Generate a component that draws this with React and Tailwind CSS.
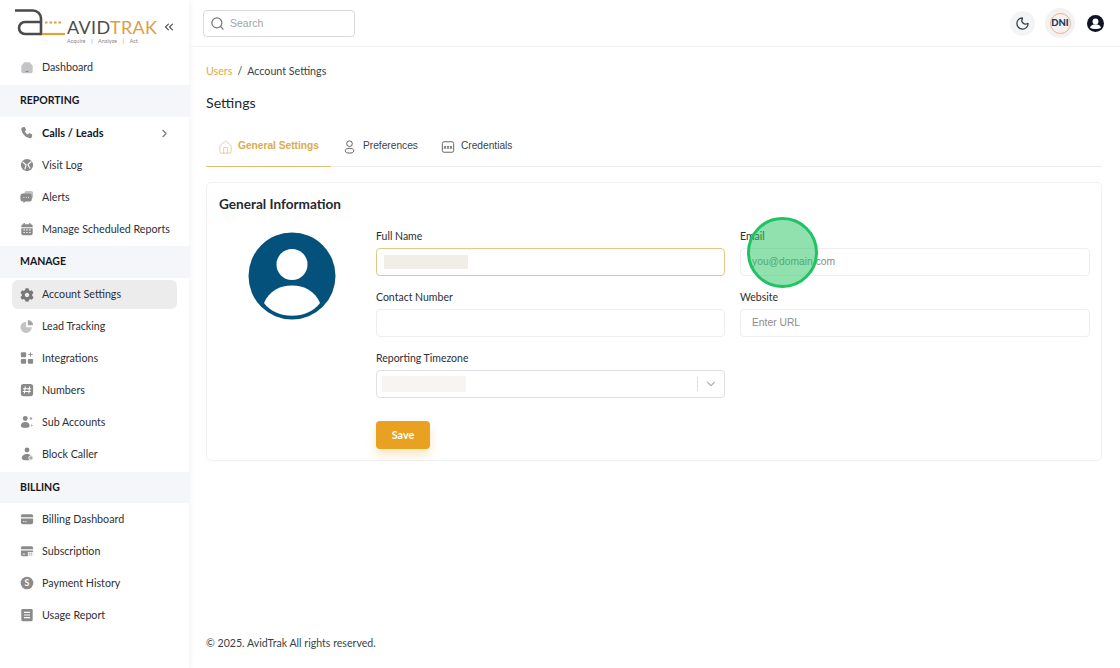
import { Search, ChevronRight, ChevronDown, ChevronsLeft, Moon, Home } from 'lucide-react'
import { FaCog } from 'react-icons/fa'

const font = "font-['Lato','Noto_Sans',sans-serif]"

function Ico({ children }) {
  return (
    <svg viewBox="0 0 16 16" className="h-[14px] w-[14px] shrink-0 fill-[#8a8a8a]">
      {children}
    </svg>
  )
}

const icons = {
  dashboard: <Ico><path d="M1.500 6.500 5 2.500h6l3.500 4V13a2 2 0 0 1-2 2h-9a2 2 0 0 1-2-2z" fill="#c4c4c6" /><rect x="6.500" y="12.500" width="3" height="1" fill="#777" /></Ico>,
  phone: <Ico><path d="M3 1.500 5.500 1 7 4.500 5.500 6c.6 1.600 1.800 2.900 3.500 3.700L10.500 8l3.500 1.700-.5 2.800c-.2.800-1 1.500-2 1.400C6.500 13.500 2.500 9 1.500 4 1.400 2.800 2.100 1.800 3 1.500z" /></Ico>,
  globe: <Ico><circle cx="8" cy="8" r="7" /><path d="M3 4.500 7 8l-1.500 5M13 4 9 7.500l2.500 4.500" fill="none" stroke="#fff" strokeWidth="1.300" /></Ico>,
  alerts: <Ico><rect x="5" y="1" width="10" height="9" rx="2.500" fill="#c2c2c2" /><path d="M3 4h8a2.500 2.500 0 0 1 2.500 2.500v4A2.500 2.500 0 0 1 11 13H6l-2 2v-2H3A2.500 2.500 0 0 1 .5 10.500v-4A2.500 2.500 0 0 1 3 4z" /><path d="M4 8.500h.9M6.600 8.500h.9M9.200 8.500h.9" stroke="#fff" strokeWidth="1.100" /></Ico>,
  calendar: <Ico><path d="M4 1h1.500v2H4zM10.500 1H12v2h-1.500z" /><path d="M1.500 4.500A2 2 0 0 1 3.500 2.500h9a2 2 0 0 1 2 2V6h-13zM1.500 7h13v6a2 2 0 0 1-2 2h-9a2 2 0 0 1-2-2z" /><path d="M4 9h1.500M7.200 9h1.500M10.500 9H12M4 12h1.500M7.200 12h1.500M10.500 12H12" stroke="#fff" strokeWidth="1.300" /></Ico>,
  gear: <FaCog size={14} className="shrink-0 text-[#777]" />,
  pie: <Ico><path d="M7 3a6.500 6.500 0 1 0 6.500 6.500H7z" fill="#c4c4c6" /><path d="M9 1a6 6 0 0 1 6 6H9z" fill="#a5a5a7" /></Ico>,
  grid: <Ico><rect x="1" y="1.500" width="6" height="5.500" rx="1" /><rect x="1" y="9" width="6" height="5.500" rx="1" /><rect x="9" y="9" width="6" height="5.500" rx="1" /><path d="M12 1.500v5M9.500 4h5" stroke="#8a8a8a" strokeWidth="1" /></Ico>,
  hash: <Ico><rect x="1" y="1" width="14" height="14" rx="3" /><path d="M6 4 5 12M11 4l-1 8M3.500 6.500h9M3.200 9.700h9" stroke="#fff" strokeWidth="1.200" /></Ico>,
  users: <Ico><circle cx="6" cy="4" r="2.800" /><path d="M1 12.500C1 9.500 3 8 6 8s5 1.500 5 4.500S1 15.500 1 12.500z" /><circle cx="12.500" cy="4" r="1.500" fill="#aaa" /><path d="M12.500 10.500 15 12l-2.500 1.500z" fill="#aaa" /></Ico>,
  block: <Ico><circle cx="8" cy="3.500" r="2.800" /><path d="M2 13c0-3 2.500-5 6-5s6 2 6 5-12 3-12 0z" /><circle cx="12.500" cy="12.500" r="2.500" fill="#aaa" stroke="#fff" /></Ico>,
  card: <Ico><path d="M1 4.500a2 2 0 0 1 2-2h10a2 2 0 0 1 2 2V6H1zM1 7.500h14V12a2 2 0 0 1-2 2H3a2 2 0 0 1-2-2z" /><path d="M3.500 11h1.500M6 11h1.500" stroke="#fff" strokeWidth="1" /></Ico>,
  sub: <Ico><path d="M1 4.500a2 2 0 0 1 2-2h10a2 2 0 0 1 2 2V6H1zM1 7.500h14V9H9v5H3a2 2 0 0 1-2-2z" /><path d="M10 10.500h5M10 12.500h5" stroke="#8a8a8a" strokeWidth="1" strokeDasharray="1.500 .8" /><path d="M3 11.500h3" stroke="#fff" strokeWidth="1" /></Ico>,
  dollar: <Ico><circle cx="8" cy="8" r="7.200" /><text x="8" y="11.500" textAnchor="middle" fontSize="10" fontWeight="700" fill="#fff" fontFamily="Lato, sans-serif">S</text></Ico>,
  report: <Ico><rect x="1.500" y="1" width="13" height="14" rx="1.500" /><path d="M4.500 5h7M4.500 8h7M4.500 11h7" stroke="#fff" strokeWidth="1.200" /></Ico>,
}

function NavItem({ icon, label, active, bold, arrow }) {
  return (
    <div className={`mx-3 flex items-center rounded-md pl-2 pr-2 ${active ? 'mt-[2px] mb-[1px] h-[29px] bg-[#ececec]' : 'h-8'}`}>
      <span className="flex w-[22px] shrink-0 items-center">{icons[icon]}</span>
      <span className={`whitespace-nowrap ${bold ? 'text-[11px] font-bold text-[#14171f]' : 'text-[10.700px] text-[#2c2f36]'}`}>{label}</span>
      {arrow && <ChevronRight size={13} className="ml-auto mr-[-2px] text-[#777]" />}
    </div>
  )
}

function Band({ children, className }) {
  return (
    <div className={`flex items-center bg-[#f4f6f9] pl-5 text-[10.500px] font-bold text-[#14171f] ${className}`}>{children}</div>
  )
}

function Sidebar() {
  return (
    <aside className="flex w-[189px] shrink-0 flex-col bg-white shadow-[1px_0_6px_rgba(0,0,0,0.06)]">
      <div className="relative flex h-[51px] shrink-0 items-start pl-[14px] pt-[9px]">
        <svg width="52" height="27" viewBox="0 0 52 27" fill="none" className="shrink-0">
          <path d="M1 1.500h18a8 8 0 0 1 8 8V25" stroke="#4b4b4b" strokeWidth="2.600" />
          <path d="M27 13H11a6 6 0 0 0 0 12h17" stroke="#4b4b4b" strokeWidth="2.600" />
          <path d="M28 25h23" stroke="#e0a238" strokeWidth="2.200" />
          <path d="M31 13.500h18" stroke="#e0a238" strokeWidth="1.800" strokeDasharray="2.500 2" />
        </svg>
        <div className="ml-[1px] mt-[8px]">
          <div className="whitespace-nowrap text-[18px] leading-[20px] font-normal tracking-[0.35px] text-[#4d4d4d]">
            AVID<span className="text-[#dd9f3c]">TRAK</span>
          </div>
          <div className="mt-[1px] whitespace-nowrap text-[5.500px] leading-[7px] text-[#888]">Acquire &nbsp;&nbsp;&nbsp;|&nbsp;&nbsp;&nbsp; Analyze &nbsp;&nbsp;&nbsp;|&nbsp;&nbsp;&nbsp; Act</div>
        </div>
        <ChevronsLeft size={14} strokeWidth={2} className="absolute left-[162px] top-[20px] text-[#555]" />
      </div>
      <NavItem icon="dashboard" label="Dashboard" />
      <Band className="mt-[2px] h-8">REPORTING</Band>
      <NavItem icon="phone" label="Calls / Leads" bold arrow />
      <NavItem icon="globe" label="Visit Log" />
      <NavItem icon="alerts" label="Alerts" />
      <NavItem icon="calendar" label="Manage Scheduled Reports" />
      <Band className="mt-[1px] h-8">MANAGE</Band>
      <NavItem icon="gear" label="Account Settings" active />
      <NavItem icon="pie" label="Lead Tracking" />
      <NavItem icon="grid" label="Integrations" />
      <NavItem icon="hash" label="Numbers" />
      <NavItem icon="users" label="Sub Accounts" />
      <NavItem icon="block" label="Block Caller" />
      <Band className="mt-[2px] h-[31px]">BILLING</Band>
      <NavItem icon="card" label="Billing Dashboard" />
      <NavItem icon="sub" label="Subscription" />
      <NavItem icon="dollar" label="Payment History" />
      <NavItem icon="report" label="Usage Report" />
    </aside>
  )
}

function Header() {
  return (
    <header className="flex h-[47px] shrink-0 items-center border-b border-[#f1f2f4] pl-[14px] pr-[16px]">
      <div className="flex h-[27px] w-[152px] items-center rounded-[4px] border border-[#d9dadd] pl-[6px]">
        <Search size={15} className="text-[#777]" />
        <span className="ml-[5px] mt-[1px] font-['Liberation_Sans',sans-serif] text-[10.500px] text-[#a3a3a3]">Search</span>
      </div>
      <div className="ml-auto flex items-center">
        <div className="flex h-[25px] w-[25px] items-center justify-center rounded-full bg-[#f3f4f7]">
          <Moon size={15} className="text-[#333a45]" />
        </div>
        <div className="ml-[10px] flex h-[30px] w-[30px] items-center justify-center rounded-full bg-[#f5f1f1]">
          <div className="flex h-[21px] w-[21px] items-center justify-center rounded-full border border-[#eab08d] text-[9.500px] font-black text-[#16375e]">DNI</div>
        </div>
        <svg viewBox="0 0 20 20" className="ml-[12px] h-[17px] w-[17px]">
          <circle cx="10" cy="10" r="10" fill="#0e1420" />
          <circle cx="10" cy="7.500" r="3.500" fill="#fff" />
          <path d="M3.500 15c1-3 3.500-4 6.500-4s5.500 1 6.500 4c-3 2-10 2-13 0z" fill="#fff" />
        </svg>
      </div>
    </header>
  )
}

function Label({ children }) {
  return <div className="mb-[4px] h-[17px] pt-[1px] text-[10.500px] leading-[17px] text-[#2c2f36]">{children}</div>
}

function Field({ label, placeholder, focus, blur }) {
  return (
    <div>
      <Label>{label}</Label>
      <div className={`flex h-[28px] items-center rounded-[4px] border bg-white pl-[11px] ${focus ? 'border-[#e3c989]' : 'border-[#eceef0]'}`}>
        {placeholder && <span className="font-['Liberation_Sans',sans-serif] text-[10.300px] text-[#8b8b8b]">{placeholder}</span>}
        {blur && <div className="-ml-1 h-[14px] w-[84px] bg-[#f1eee7]" />}
      </div>
    </div>
  )
}

function Card() {
  return (
    <section className="mt-[15px] h-[279px] rounded-[5px] border border-[#eff1f3] bg-white pl-3 pr-[11px] pt-[11px]">
      <h2 className="text-[13.600px] leading-[20px] font-bold text-[#25282f]">General Information</h2>
      <div className="mt-[13px] flex">
        <div className="w-[157px] shrink-0 pl-[29px] pt-[5px]">
          <svg viewBox="0 0 88 88" className="h-[88px] w-[88px]">
            <circle cx="44" cy="44" r="43.500" fill="#04527c" />
            <circle cx="44" cy="32.500" r="15.500" fill="#fff" />
            <path d="M16 71C21 59 32 53.500 44 53.500S67 59 72 71C60 88 28 88 16 71z" fill="#fff" />
          </svg>
        </div>
        <div className="grid flex-1 grid-cols-[349px_350px] gap-x-[15px] gap-y-[12px]">
          <Field label="Full Name" focus blur />
          <Field label="Email" placeholder="you@domain.com" />
          <Field label="Contact Number" />
          <Field label="Website" placeholder="Enter URL" />
          <div>
            <Label>Reporting Timezone</Label>
            <div className="flex h-[28px] items-center rounded-[4px] border border-[#dfe1e4] bg-white pl-[5px]">
              <div className="h-[16px] w-[84px] bg-[#f6f5f2]" />
              <div className="ml-auto h-[14px] w-px bg-[#dedede]" />
              <ChevronDown size={14} className="mx-[6px] text-[#b5b5b5]" />
            </div>
            <button className="mt-[23px] h-[28px] w-[54px] rounded-[4px] bg-[#e8a120] text-[10.800px] font-bold text-white shadow-[0_6px_10px_rgba(232,161,32,0.25)]">Save</button>
          </div>
        </div>
      </div>
    </section>
  )
}

function Tabs() {
  return (
    <div className="mt-[11px] flex h-[43px] items-stretch border-b border-[#eceef0] pt-[2px] font-['Liberation_Sans',sans-serif] text-[10.200px]">
      <div className="-mb-px flex w-[125px] items-center border-b border-[#e0c077] pl-[12px] font-bold text-[#dcaa4c]">
        <Home size={15} strokeWidth={1} className="mr-[5px] mt-[2px] text-[#d9b36a]" />
        General Settings
      </div>
      <div className="ml-[11px] flex items-center text-[#3c3f46]">
        <svg viewBox="0 0 16 16" fill="none" stroke="#555" strokeWidth="1" className="mr-[6px] mt-[1px] h-[15px] w-[15px]">
          <circle cx="8" cy="5" r="3" />
          <ellipse cx="8" cy="12.500" rx="4.500" ry="2.500" />
        </svg>
        Preferences
      </div>
      <div className="ml-[23px] flex items-center text-[#3c3f46]">
        <svg viewBox="0 0 16 16" fill="none" stroke="#555" strokeWidth="1" className="mr-[6px] mt-[1px] h-[14px] w-[14px]">
          <rect x="1.500" y="2" width="13" height="12" rx="2" />
          <path d="M3.500 7l2 3M5.500 7l-2 3M7 7l2 3M9 7l-2 3M10.500 7l2 3M12.500 7l-2 3" />
        </svg>
        Credentials
      </div>
    </div>
  )
}

export default function App() {
  return (
    <div className={`relative flex h-[668px] w-[1120px] overflow-hidden bg-white ${font}`}>
      <Sidebar />
      <div className="flex min-w-0 flex-1 flex-col">
        <Header />
        <main className="flex flex-1 flex-col pl-[17px] pr-[18px] pt-[16px]">
          <div className="text-[10.700px] leading-[16px] text-[#3c3f46]">
            <span className="text-[#dcaa4c]">Users</span>
            <span className="mx-[5px]">/</span>
            Account Settings
          </div>
          <h1 className="mt-[14px] text-[14.200px] leading-[20px] text-[#25282f]">Settings</h1>
          <Tabs />
          <Card />
          <footer className="mt-auto pb-[17px] text-[10.600px] leading-[16px] text-[#3c3f46]">© 2025. AvidTrak All rights reserved.</footer>
        </main>
      </div>
      <div className="pointer-events-none absolute left-[747px] top-[217px] h-[71px] w-[71px] rounded-full border-[3px] border-[#1fc364] bg-[#22c35e]/50" />
    </div>
  )
}
